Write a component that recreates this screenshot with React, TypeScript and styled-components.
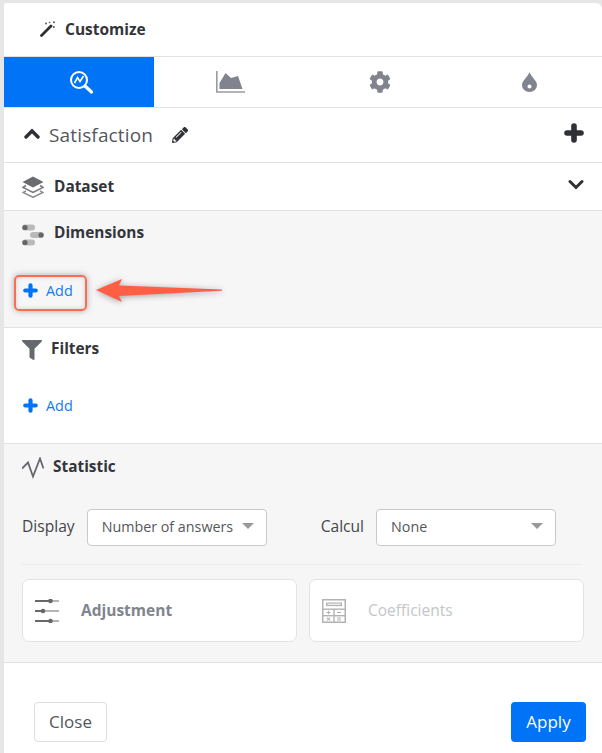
import React from "react";
import styled, { createGlobalStyle } from "styled-components";
import { FaCog, FaPencilAlt, FaFilter } from "react-icons/fa";

const Global = createGlobalStyle`
  html, body { margin: 0; padding: 0; background: #e6e6e6; }
  * { box-sizing: border-box; }
  body { font-family: "Open Sans", "Liberation Sans", sans-serif; color: #333; }
`;

const Frame = styled.div`
  position: relative;
  width: 602px;
  height: 753px;
  padding: 3px 0 0 4px;
  overflow: hidden;
`;

const Panel = styled.div`
  width: 598px;
  height: 750px;
  background: #fff;
  border-top-right-radius: 6px;
  border-top-left-radius: 2px;
  display: flex;
  flex-direction: column;
`;

const Header = styled.div`
  height: 54px;
  flex: none;
  display: flex;
  align-items: center;
  gap: 10px;
  padding: 0 0 2px 36px;
  border-bottom: 1px solid #e2e2e2;
  font-size: 15.5px;
  font-weight: 700;
  color: #33353a;
`;

const Tabs = styled.div`
  height: 51px;
  flex: none;
  display: flex;
  border-bottom: 1px solid #e2e2e2;
`;

const Tab = styled.div<{ $active?: boolean }>`
  width: 150px;
  padding-left: 4px;
  display: flex;
  align-items: center;
  justify-content: center;
  background: ${(p) => (p.$active ? "#0073f7" : "#fff")};
  color: ${(p) => (p.$active ? "#fff" : "#81848e")};
`;

const TitleRow = styled.div`
  height: 55px;
  flex: none;
  display: flex;
  align-items: center;
  padding: 0 18px 0 20px;
  border-bottom: 1px solid #e2e2e2;
  color: #2f3136;
`;

const TitleChevron = styled.span`
  display: flex;
  margin-top: -4px;
`;

const Title = styled.span`
  font-size: 19px;
  color: #55575c;
  margin-left: 9px;
  letter-spacing: 0.15px;
`;

const TitleEdit = styled.span`
  display: flex;
  margin-left: 19px;
  font-size: 16px;
`;

const TitleAdd = styled.span`
  display: flex;
  margin-left: auto;
  margin-top: -5px;
`;

const Section = styled.section<{ $h: number; $grey?: boolean }>`
  height: ${(p) => p.$h}px;
  flex: none;
  background: ${(p) => (p.$grey ? "#f6f6f6" : "#fff")};
  border-bottom: 1px solid #e2e2e2;
  padding: 0 18px;
  display: flex;
  flex-direction: column;
`;

const SectionHead = styled.div<{ $shift?: number }>`
  display: flex;
  align-items: center;
  height: 47px;
  flex: none;
  margin-top: ${(p) => p.$shift ?? -1}px;
`;

const HeadIcon = styled.span<{ $w?: number; $dy?: number }>`
  width: ${(p) => p.$w ?? 32}px;
  margin-top: ${(p) => p.$dy ?? 0}px;
  flex: none;
  display: flex;
  color: #65686c;
`;

const HeadLabel = styled.span`
  font-size: 15.4px;
  font-weight: 700;
  color: #33353a;
`;

const HeadToggle = styled.span`
  display: flex;
  margin-left: auto;
  margin-top: -4px;
  color: #2f3136;
`;

const AddRow = styled.div<{ $top: number }>`
  margin-top: ${(p) => p.$top}px;
  display: flex;
`;

const AddButton = styled.button<{ $marked?: boolean }>`
  display: flex;
  align-items: center;
  gap: 8px;
  border: none;
  background: transparent;
  height: 22px;
  padding: 0 0 0 1px;
  font: inherit;
  font-size: 14.4px;
  color: #0f7bf5;
  ${(p) =>
    p.$marked &&
    `
    position: relative;
    &::after {
      content: "";
      position: absolute;
      left: -8px;
      top: -4px;
      width: 69px;
      height: 32px;
      border: 2px solid #ff6a52;
      border-radius: 5px;
      box-shadow: 0 0 6px rgba(0,0,0,.3), inset 0 0 5px rgba(0,0,0,.15);
    }
  `}
`;

const Fields = styled.div`
  display: flex;
  align-items: center;
  margin-top: 19px;
  padding-bottom: 18px;
  border-bottom: 1px solid #ebebeb;
  width: 560px;
`;

const FieldLabel = styled.label`
  font-size: 15.6px;
  color: #44464a;
  margin-top: -4px;
`;

const Select = styled.div<{ $w: number; $ml: number }>`
  width: ${(p) => p.$w}px;
  margin-left: ${(p) => p.$ml}px;
  height: 37px;
  background: #fff;
  border: 1px solid #c9c9c9;
  border-radius: 4px;
  display: flex;
  align-items: center;
  padding: 0 12px 3px 14px;
  font-size: 14.3px;
  color: #55575c;
  &::after {
    content: "";
    margin-left: auto;
    border-left: 6px solid transparent;
    border-right: 6px solid transparent;
    border-top: 6px solid #999;
  }
`;

const CalculField = styled.div`
  margin-left: 54px;
  display: flex;
  align-items: center;
`;

const Cards = styled.div`
  display: flex;
  gap: 12px;
  margin-top: 14px;
`;

const Card = styled.div<{ $disabled?: boolean }>`
  flex: 1;
  height: 63px;
  background: #fff;
  border: 1px solid #e3e3e3;
  border-radius: 7px;
  display: flex;
  align-items: center;
  gap: 22px;
  padding: 0 12px;
  font-size: 15.5px;
  font-weight: ${(p) => (p.$disabled ? 400 : 700)};
  color: ${(p) => (p.$disabled ? "#c4c6ca" : "#81848e")};
`;

const CardLabel = styled.span`
  margin-top: -2px;
`;

const Footer = styled.div`
  flex: 1;
  display: flex;
  justify-content: space-between;
  align-items: flex-start;
  padding: 39px 16px 0 30px;
`;

const CloseButton = styled.button`
  width: 73px;
  height: 40px;
  padding: 0 0 2px;
  background: #fff;
  border: 1px solid #dedede;
  border-radius: 4px;
  font: inherit;
  font-size: 17px;
  color: #55575c;
`;

const ApplyButton = styled.button`
  width: 75px;
  height: 40px;
  padding: 0 0 2px;
  background: #0073f7;
  border: none;
  border-radius: 4px;
  font: inherit;
  font-size: 17px;
  color: #fff;
`;

const Arrow = styled.svg`
  position: absolute;
  left: 90px;
  top: 272px;
  overflow: visible;
  filter: drop-shadow(0 1px 3px rgba(0,0,0,.35));
`;

const WandIcon = () => (
  <svg width="15" height="16" viewBox="0 0 15 16">
    <path d="M1.5 14.5 L11 5" stroke="#2e3034" strokeWidth="2.8" strokeLinecap="round" />
    <g fill="#55575c">
      <circle cx="6" cy="2.5" r="1" />
      <circle cx="9.5" cy="1.5" r="0.8" />
      <circle cx="14" cy="1.2" r="1" />
      <circle cx="13.8" cy="6" r="1" />
    </g>
  </svg>
);

const SearchChartIcon = () => (
  <svg width="24" height="24" viewBox="0 0 24 24" fill="none" stroke="#fff">
    <circle cx="10" cy="10" r="8" strokeWidth="2" />
    <path d="M5.5 13 L8.5 7.5 L11 11.5 L14.5 6" strokeWidth="1.6" />
    <path d="M16 16 L22.5 22" strokeWidth="3.2" strokeLinecap="round" />
  </svg>
);

const AreaChartIcon = () => (
  <svg width="29" height="22" viewBox="0 0 29 22">
    <path d="M0.8 0 V21 H29" fill="none" stroke="#9a9ca4" strokeWidth="1.6" />
    <path d="M3.5 18 V12 L9.5 2 L15 7 L22 5 L26.5 18 Z" fill="#81848e" />
  </svg>
);

const DropIcon = () => (
  <svg width="15" height="20" viewBox="0 0 15 20">
    <path d="M7.5 0 C9 5 15 8.5 15 13 A7.5 7 0 0 1 0 13 C0 8.5 6 5 7.5 0 Z" fill="#81848e" />
    <circle cx="7.5" cy="14.5" r="2" fill="#fff" />
  </svg>
);

const ChevronUpIcon = () => (
  <svg width="16" height="11" viewBox="0 0 16 11" fill="none" stroke="#2f3136" strokeWidth="3.4" strokeLinecap="round">
    <path d="M2 9 L8 3 L14 9" />
  </svg>
);

const ChevronDownIcon = () => (
  <svg width="16" height="11" viewBox="0 0 16 11" fill="none" stroke="#2f3136" strokeWidth="3" strokeLinecap="round">
    <path d="M2 2.5 L8 8.5 L14 2.5" />
  </svg>
);

const PlusIcon = ({ size, color }: { size: number; color: string }) => (
  <svg width={size} height={size} viewBox="0 0 20 20" fill="none" stroke={color} strokeWidth="5.6" strokeLinecap="round">
    <path d="M10 3 V17 M3 10 H17" />
  </svg>
);

const LayersIcon = () => (
  <svg width="22" height="22" viewBox="0 0 22 22">
    <path d="M11 0.5 L21.5 6 L11 11.5 L0.5 6 Z" fill="#6a6c70" />
    <path d="M4 9.5 L1 11.3 L11 16.5 L21 11.3 L18 9.5" fill="none" stroke="#77797d" strokeWidth="1.5" />
    <path d="M4 14.8 L1 16.5 L11 21.3 L21 16.5 L18 14.8" fill="none" stroke="#8b8d91" strokeWidth="1.5" />
  </svg>
);

const DimensionsIcon = () => (
  <svg width="22" height="22" viewBox="0 0 22 22">
    <rect x="0" y="0.5" width="13" height="6" rx="3" fill="#b9b9b9" />
    <circle cx="3" cy="3.5" r="2.6" fill="#666" />
    <rect x="8" y="8" width="14" height="6" rx="3" fill="#b9b9b9" />
    <circle cx="19" cy="11" r="2.6" fill="#666" />
    <rect x="0" y="15.5" width="13" height="6" rx="3" fill="#b9b9b9" />
    <circle cx="3" cy="18.5" r="2.6" fill="#666" />
  </svg>
);

const PulseIcon = () => (
  <svg width="22" height="22" viewBox="0 0 22 22" fill="none" stroke="#65686c" strokeWidth="1.8">
    <path d="M0 11.5 L6 5.5 L11 19.5 L18 1.5 L21.5 11.5" />
  </svg>
);

const SlidersIcon = () => (
  <svg width="24" height="24" viewBox="0 0 24 24">
    <g stroke="#b5b5b5" strokeWidth="2"><path d="M15 2h9M9 12h15M15 22h9" /></g>
    <g stroke="#66686c" strokeWidth="2"><path d="M0 2h15M0 12h8M0 22h15" /></g>
    <g fill="#66686c"><circle cx="15.5" cy="2" r="2.3" /><circle cx="8" cy="12" r="2.3" /><circle cx="15.5" cy="22" r="2.3" /></g>
  </svg>
);

const CalculatorIcon = () => (
  <svg width="24" height="24" viewBox="0 0 24 24">
    <rect x="0" y="0" width="24" height="24" fill="#b2b2b2" />
    <rect x="1.5" y="1.5" width="21" height="21" fill="#fff" />
    <rect x="1" y="9.5" width="22" height="1.4" fill="#b2b2b2" />
    <rect x="1" y="16" width="22" height="1.4" fill="#b2b2b2" />
    <rect x="11.3" y="10" width="1.4" height="13" fill="#b2b2b2" />
    <rect x="4" y="3.5" width="16" height="3.6" fill="#b2b2b2" />
    <rect x="5.3" y="4.6" width="13.4" height="1.4" fill="#eee" />
    <path d="M4.5 13.5h4M6.5 11.7v3.6M15 13.5h4M4.8 18.6l3.4 3M8.2 18.6l-3.4 3M15 19h4M15 21h4" stroke="#b2b2b2" strokeWidth="1.1" />
  </svg>
);

export default function App() {
  return (
    <Frame>
      <Global />
      <Panel>
        <Header>
          <WandIcon />
          <span>Customize</span>
        </Header>
        <Tabs>
          <Tab $active><SearchChartIcon /></Tab>
          <Tab><AreaChartIcon /></Tab>
          <Tab><FaCog size={22} /></Tab>
          <Tab><DropIcon /></Tab>
        </Tabs>
        <TitleRow>
          <TitleChevron><ChevronUpIcon /></TitleChevron>
          <Title>Satisfaction</Title>
          <TitleEdit><FaPencilAlt /></TitleEdit>
          <TitleAdd><PlusIcon size={20} color="#2f3136" /></TitleAdd>
        </TitleRow>
        <Section $h={48}>
          <SectionHead $shift={0}>
            <HeadIcon><LayersIcon /></HeadIcon>
            <HeadLabel>Dataset</HeadLabel>
            <HeadToggle><ChevronDownIcon /></HeadToggle>
          </SectionHead>
        </Section>
        <Section $h={117} $grey>
          <SectionHead $shift={-2}>
            <HeadIcon $dy={4}><DimensionsIcon /></HeadIcon>
            <HeadLabel>Dimensions</HeadLabel>
          </SectionHead>
          <AddRow $top={23}>
            <AddButton $marked><PlusIcon size={15} color="#0073f7" />Add</AddButton>
          </AddRow>
        </Section>
        <Section $h={116}>
          <SectionHead $shift={-3}>
            <HeadIcon $w={29} $dy={2}><FaFilter size={20} /></HeadIcon>
            <HeadLabel>Filters</HeadLabel>
          </SectionHead>
          <AddRow $top={22}>
            <AddButton><PlusIcon size={15} color="#0073f7" />Add</AddButton>
          </AddRow>
        </Section>
        <Section $h={219} $grey>
          <SectionHead>
            <HeadIcon $w={31} $dy={2}><PulseIcon /></HeadIcon>
            <HeadLabel>Statistic</HeadLabel>
          </SectionHead>
          <Fields>
            <FieldLabel>Display</FieldLabel>
            <Select $w={180} $ml={12}>Number of answers</Select>
            <CalculField>
              <FieldLabel>Calcul</FieldLabel>
              <Select $w={180} $ml={12}>None</Select>
            </CalculField>
          </Fields>
          <Cards>
            <Card><SlidersIcon /><CardLabel>Adjustment</CardLabel></Card>
            <Card $disabled><CalculatorIcon /><CardLabel>Coefficients</CardLabel></Card>
          </Cards>
        </Section>
        <Footer>
          <CloseButton>Close</CloseButton>
          <ApplyButton>Apply</ApplyButton>
        </Footer>
      </Panel>
      <Arrow width="134" height="38" viewBox="0 0 134 38">
        <path d="M6 18 L32 7 L29 13.5 L132 17.5 L132 18.8 L29 24 L32 30 Z" fill="#ff5f45" />
      </Arrow>
    </Frame>
  );
}
